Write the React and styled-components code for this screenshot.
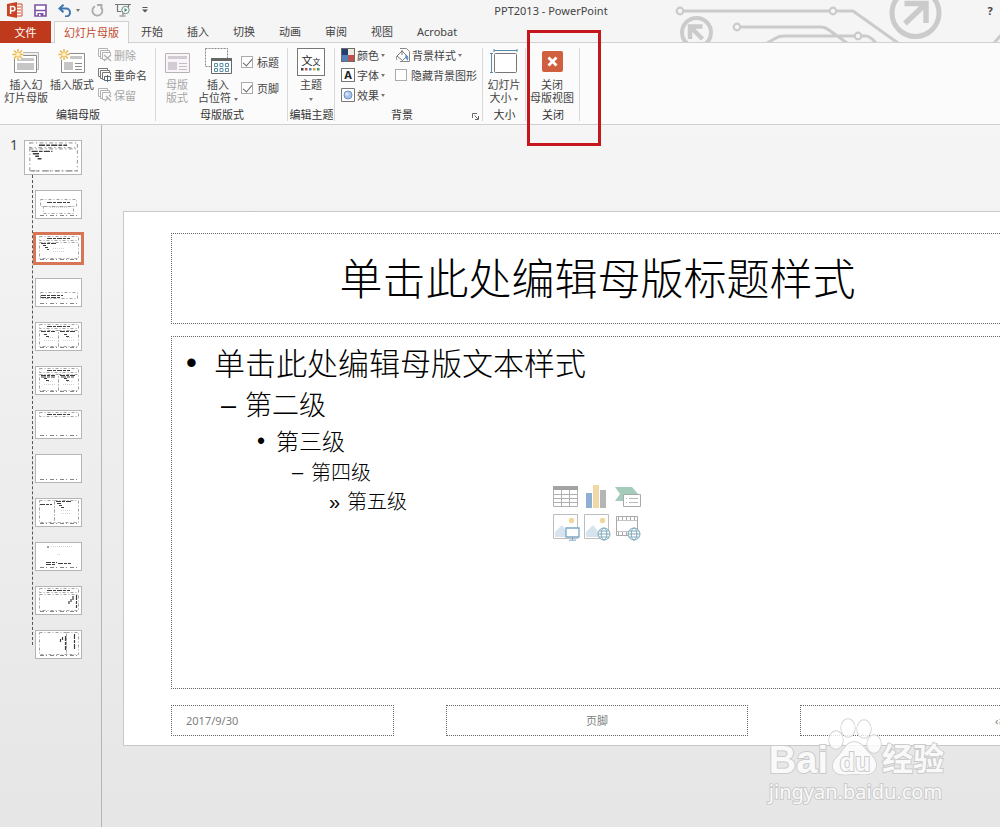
import React, { useState } from 'react'
import styled, { createGlobalStyle } from 'styled-components'

const GlobalStyle = createGlobalStyle`
    * {
        box-sizing: border-box;
    }
    body {
        margin: 0;
        overflow: hidden;
        background: #f5f5f5;
        color: #444;
        font: 11px/13px "Noto Sans", "Noto Sans CJK SC", sans-serif;
    }
    button {
        padding: 0;
        border: none;
        background: none;
        color: inherit;
        font: inherit;
    }
    svg {
        display: block;
        flex: none;
    }
`

const tabs = ['开始', '插入', '切换', '动画', '审阅', '视图', 'Acrobat']

const levels = [
    { text: '单击此处编辑母版文本样式', mark: '•', indent: 0, gap: 28, size: 31, height: 42 },
    { text: '第二级', mark: '–', indent: 35, gap: 24, size: 27, height: 42 },
    { text: '第三级', mark: '•', indent: 71, gap: 19, size: 23, height: 31 },
    { text: '第四级', mark: '–', indent: 106, gap: 19, size: 20, height: 31 },
    { text: '第五级', mark: '»', indent: 143, gap: 18, size: 20, height: 28 },
]

const layouts = ['title', 'content', 'section', 'two', 'compare', 'titleOnly', 'blank', 'caption', 'picture', 'vertical', 'verticalTitle']

/* ---------- quick access icons ---------- */

const LogoIcon = () => (
    <svg width="16" height="16" viewBox="0 0 16 16">
        <path d="M9 2h6v12H9z" fill="#fff" stroke="#d04a2b" />
        <path d="M10 5h4M10 8h4M10 11h4" stroke="#d04a2b" />
        <path d="M0 2l10-2v16L0 14z" fill="#cb4325" />
        <path d="M3.600 12V4.500h2.200a2 2 0 0 1 0 4.300H3.600" fill="none" stroke="#fff" strokeWidth="1.500" />
    </svg>
)

const SaveIcon = () => (
    <svg width="13" height="13" viewBox="0 0 13 13">
        <path d="M1 1h11v11H1z" fill="#fff" stroke="#7c52a4" strokeWidth="1.600" />
        <path d="M1 6.500h11" stroke="#7c52a4" strokeWidth="1.500" />
        <path d="M3.500 12V9h6v3" fill="#7c52a4" />
        <path d="M5 10h1.500v2H5z" fill="#fff" />
    </svg>
)

const UndoIcon = () => (
    <svg width="14" height="13" viewBox="0 0 14 13">
        <path d="M1.500 4.500H8a4 4 0 0 1 0 8H7M5.500 .8L1.500 4.500l4 3.700" fill="none" stroke="#3d76ad" strokeWidth="2" />
    </svg>
)

const RedoIcon = () => (
    <svg width="13" height="13" viewBox="0 0 13 13">
        <path d="M9.800 3A5 5 0 1 1 4 2.300M6 1h4.500v4.500" fill="none" stroke="#ababab" strokeWidth="1.800" />
    </svg>
)

const ShowIcon = () => (
    <svg width="16" height="14" viewBox="0 0 16 14">
        <path d="M0 1.500h16M2.500 1.500v7h4M13.500 1.500v3M8 9v3M4.500 13h6" fill="none" stroke="#777" strokeWidth="1.200" />
        <circle cx="10.500" cy="7" r="3.700" fill="#fff" stroke="#6c8c80" />
        <path d="M9.500 5l3 2-3 2z" fill="#3f9474" />
    </svg>
)

const QatMenuIcon = () => (
    <svg width="6" height="6" viewBox="0 0 6 6">
        <path d="M.5 .5h5" stroke="#555" />
        <path d="M0 2.500h6l-3 3z" fill="#555" />
    </svg>
)

const Circuit = () => (
    <svg width="330" height="42" viewBox="670 0 330 42" fill="none" stroke="#cbcbcb" strokeWidth="3">
        <path d="M683 11h146M837 11h16l45 32M740 27h81q4 0 8 3l18 13M767 43l9-5q3-2 8-2h70M862 36h4q4 0 10 7M994 43l8-9" />
        <circle cx="680" cy="11" r="3.300" strokeWidth="2.200" />
        <circle cx="833" cy="11" r="3.300" strokeWidth="2.200" />
        <circle cx="737" cy="27" r="3.300" strokeWidth="2.200" />
        <circle cx="858" cy="36" r="3.300" strokeWidth="2.200" />
        <circle cx="696.500" cy="32.500" r="14.500" strokeWidth="4" />
        <path d="M690 39V26.500h12.500M690.500 27l12 12" strokeWidth="4.500" />
        <circle cx="915.500" cy="13" r="23.500" strokeWidth="5" />
        <path d="M904.500 3.500H926V23M925 4.500l-20 19" strokeWidth="5.500" />
    </svg>
)

/* ---------- ribbon icons ---------- */

const Spark = () => (
    <path d="M6 0v11M.5 5.500h11M2 1.500l8 8M10 1.500l-8 8" stroke="#e9b64b" strokeWidth="1.400" />
)

const InsertMasterIcon = () => (
    <svg width="28" height="26" viewBox="0 0 28 26">
        <path d="M4.500 3.500h22v17h-22z" fill="#eee" stroke="#b5b5b5" />
        <path d="M2.500 6.500h22v17h-22z" fill="#fff" stroke="#8b8b8b" />
        <path d="M5 9h17v3H5zM5 14h17v7H5z" fill="#c6c6c6" />
        <circle cx="6" cy="5.500" r="5.500" fill="#fbfbfb" />
        <Spark />
        <circle cx="6" cy="5.500" r="2" fill="#fff3c4" />
    </svg>
)

const InsertLayoutIcon = () => (
    <svg width="28" height="26" viewBox="0 0 28 26">
        <path d="M3.500 4.500h23v19h-23z" fill="#fff" stroke="#8b8b8b" />
        <path d="M12 7h12v3H12zM6 13h9v8H6z" fill="#c6c6c6" />
        <path d="M17 14.500h7M17 17.500h7M17 20.500h7" stroke="#8b8b8b" />
        <circle cx="6" cy="5.500" r="5.500" fill="#fbfbfb" />
        <Spark />
        <circle cx="6" cy="5.500" r="2" fill="#fff3c4" />
    </svg>
)

const MasterLayoutIcon = () => (
    <svg width="25" height="24" viewBox="0 0 25 24">
        <path d="M.5 3.500h24v19H.5z" fill="#f8f4f8" stroke="#b9b2b9" />
        <path d="M3 6h19v3H3zM3 12h9v8H3z" fill="#d3cbd3" />
        <path d="M14 13.500h8M14 16.500h8M14 19.500h8" stroke="#c5bdc5" />
    </svg>
)

const PlaceholderIcon = () => (
    <svg width="27" height="27" viewBox="0 0 27 27">
        <path d="M.5 .5h22v18H.5z" fill="#fff" stroke="#888" strokeDasharray="2 1" />
        <path d="M6.500 10.500h20v15h-20z" fill="#fff" stroke="#666" />
        <path d="M6 10h21v3H6z" fill="#666" />
        <path d="M9.500 15.500h3v3h-3zM15 15.500h3v3h-3zM20.500 15.500h3v3h-3zM9.500 20.500h3v3h-3zM15 20.500h3v3h-3zM20.500 20.500h3v3h-3z" fill="none" stroke="#5c8fa8" />
    </svg>
)

const SlideSizeIcon = () => (
    <svg width="28" height="25" viewBox="0 0 28 25">
        <path d="M4 1.500h23M4 0v3M27 0v3M1.500 4v20M0 4.500h3M0 23.500h3" stroke="#5b8ba8" fill="none" />
        <rect x="4.500" y="4.500" width="22" height="19" rx="1" fill="#fff" stroke="#777" />
    </svg>
)

const CloseIcon = () => (
    <svg width="21" height="21" viewBox="0 0 21 21">
        <rect width="21" height="21" rx="2" fill="#d05f40" />
        <path d="M6.500 6.500l8 8M14.500 6.500l-8 8" stroke="#fff" strokeWidth="2.800" />
    </svg>
)

const SlideStack = ({ color, children }) => (
    <svg width="14" height="14" viewBox="0 0 14 14" fill="none" stroke={color}>
        <path d="M2.500 8.500h-2v-8h9v2" />
        <path d="M4.500 10.500h-2v-8h9v2" />
        <path d="M7 11.500H4.500v-7h8V7" />
        {children}
    </svg>
)

const ColorsIcon = () => (
    <svg width="14" height="14" viewBox="0 0 14 14">
        <path d="M0 0h14v14H0z" fill="#6b6b6b" />
        <path d="M1 1h6v6H1z" fill="#243f6f" />
        <path d="M7 1h6v6H7z" fill="#efeadf" />
        <path d="M1 7h6v6H1z" fill="#5182bb" />
        <path d="M7 7h6v6H7z" fill="#c0504d" />
    </svg>
)

const EffectsIcon = () => (
    <svg width="14" height="14" viewBox="0 0 14 14">
        <path d="M.5 .5h13v13H.5z" fill="#fff" stroke="#777" />
        <circle cx="7" cy="7" r="4" fill="#a9c4e8" stroke="#6f93c4" />
        <circle cx="6" cy="6" r="1.800" fill="#d9e6f7" />
    </svg>
)

const BucketIcon = () => (
    <svg width="14" height="14" viewBox="0 0 14 14" fill="none">
        <path d="M4 .5h6.500l3 3v10H4" fill="#fff" stroke="#888" />
        <path d="M1 8l5-5 5 5-4.500 4.500z" fill="#fff" stroke="#777" />
        <path d="M6 7V2" stroke="#777" />
        <path d="M10 7c2 1 2 3 1.500 5-1.500-1-2-3-1.500-5z" fill="#5b8fc7" stroke="#5b8fc7" />
        <path d="M1 8c-1 2-.5 3.500 0 4" stroke="#777" />
    </svg>
)

const LauncherIcon = () => (
    <svg width="7" height="7" viewBox="0 0 7 7" fill="none" stroke="#666">
        <path d="M.5 5V.5H5M2.500 2.500l3.500 3.500M6.500 3v3.500H3" />
    </svg>
)

/* ---------- placeholder icons ---------- */

const Globe = ({ x }) => (
    <g fill="none" stroke="#7fa9bd" strokeWidth="1">
        <circle cx={x} cy="20" r="6" fill="#fff" />
        <ellipse cx={x} cy="20" rx="2.800" ry="6" />
        <path d={`M${x - 6} 20h12M${x - 5} 17h10M${x - 5} 23h10`} />
    </g>
)

const PictureBase = () => (
    <g>
        <path d="M.5 .5h24v24H.5z" fill="#fff" stroke="#bdbdbd" />
        <circle cx="18.500" cy="6.500" r="2.700" fill="#f0d89c" />
        <path d="M2 23v-5l6-6q1-1 2 0l8 11z" fill="#d7e4ef" />
    </g>
)

const TableGlyph = () => (
    <svg width="25" height="23" viewBox="0 0 25 23">
        <path d="M.5 1.500h24v20H.5zM.5 9.500h24M.5 13.500h24M.5 17.500h24M8.500 5v17M16.500 5v17" fill="#fff" stroke="#b0b0b0" />
        <path d="M0 1h25v4H0z" fill="#a3a3a3" />
    </svg>
)

const ChartGlyph = () => (
    <svg width="25" height="23" viewBox="0 0 25 23">
        <path d="M2 8h6v15H2z" fill="#8fb0d3" />
        <path d="M9 0h6v23H9z" fill="#f0d9a5" />
        <path d="M16 5h6v18h-6z" fill="#b5b5b5" />
    </svg>
)

const SmartArtGlyph = () => (
    <svg width="26" height="23" viewBox="0 0 26 23">
        <path d="M0 2h17l6 7-7 7H0l5-7z" fill="#a5cbbb" />
        <path d="M8.500 9.500h17v12h-17z" fill="#fff" stroke="#aaa" />
        <path d="M11 13.500h1M14 13.500h9M11 17.500h1M14 17.500h9" stroke="#b9b9b9" />
    </svg>
)

const PictureGlyph = () => (
    <svg width="27" height="27" viewBox="0 0 27 27">
        <PictureBase />
        <path d="M13 14h13v9H13z" fill="#fff" stroke="#7ba7c4" strokeWidth="1.300" />
        <path d="M19.500 23v3M16 26.200h7" stroke="#7ba7c4" />
    </svg>
)

const OnlinePictureGlyph = () => (
    <svg width="27" height="27" viewBox="0 0 27 27">
        <PictureBase />
        <Globe x={20} />
    </svg>
)

const VideoGlyph = () => (
    <svg width="26" height="27" viewBox="0 0 26 27">
        <path d="M1.500 2.500h21v19h-21z" fill="#fff" stroke="#aaa" />
        <path d="M3 4.500h19M3 19.500h11" stroke="#aaa" strokeWidth="3" strokeDasharray="1 3" />
        <path d="M2 6.500h20M2 17.500h12" stroke="#c4c4c4" />
        <Globe x={19} />
    </svg>
)

/* ---------- thumbnails ---------- */

const Frame = props => <rect {...props} fill="none" stroke="#a2a2a2" strokeWidth="1" strokeDasharray="3 2 1 2" />

const Ink = ({ d, light }) => <path d={d} fill="none" stroke={light ? '#d0d4d0' : '#3d3d3d'} strokeWidth="1.200" strokeDasharray={light ? '1 1' : '5 1 3 1'} />

const Thumb = ({ kind }) => {
    const top = !['title', 'section', 'blank', 'caption', 'picture', 'verticalTitle'].includes(kind)
    return (
        <svg width="100%" height="100%" viewBox="0 0 45 27">
            <path d="M4 24.500h38" stroke="#858585" strokeDasharray="4 2 1 3" />
            {top && <Ink d="M11 3.500h23" />}
            {top && <Frame x="3.500" y="1.500" width="39" height="4" />}
            {kind === 'master' && <g><Frame x="3.500" y="6.500" width="39" height="18" /><Ink d="M5 8.500h17M6 10.500h5M8 12.500h3M10 14.500h3" /></g>}
            {kind === 'title' && <g><Frame x="4.500" y="8.500" width="36" height="7" /><Frame x="7.500" y="15.500" width="30" height="7" /><Ink d="M11 11.500h23" /><Ink light d="M14 16.500h17" /></g>}
            {kind === 'content' && <g><Frame x="3.500" y="7.500" width="39" height="16" /><Ink d="M5 8.500h15M7 10.500h3M9 12.500h3M11 14.500h2" /><Ink light d="M17 13.500h11M17 16.500h11" /></g>}
            {kind === 'section' && <g><Frame x="4.500" y="13.500" width="37" height="6" /><Ink d="M5 16.500h22M5 18.500h20" /></g>}
            {(kind === 'two' || kind === 'compare') && (
                <g>
                    <Frame x="3.500" y="7.500" width="19" height="16" />
                    <Frame x="22.500" y="7.500" width="20" height="16" />
                    <Ink d="M5 8.500h14M24 8.500h15M8 11.500h3M10 13.500h3M28 11.500h3M30 13.500h3" />
                    <Ink light d="M8 17.500h11M27 17.500h11M12 14.500h6M31 14.500h6" />
                    {kind === 'compare' && <Ink d="M5 10h14M25 10h13" />}
                </g>
            )}
            {kind === 'caption' && <g><Frame x="3.500" y="1.500" width="15" height="22" /><Frame x="18.500" y="1.500" width="24" height="22" /><Ink d="M4 5.500h12M20 2.500h16M21 4.500h4M23 6.500h3M25 8.500h3" /><Ink light d="M25 11.500h10M25 14.500h10" /></g>}
            {kind === 'picture' && <g><Ink d="M11 4h2M10 19.500h11M10 21.500h9M22 20.500h13" /><Ink light d="M15 3.500h21M21 11.500h4" /></g>}
            {kind === 'vertical' && <g><Frame x="3.500" y="7.500" width="39" height="16" /><Ink d="M40.500 8v13M37 9v4M35 12v3M33 14v3" /></g>}
            {kind === 'verticalTitle' && <g><Frame x="3.500" y="1.500" width="27" height="22" /><Frame x="30.500" y="1.500" width="12" height="22" /><Ink d="M38.500 3v16M29.500 5v14M26.500 6v3M24.500 8v3" /></g>}
        </svg>
    )
}

const Paw = () => (
    <svg width="54" height="58" viewBox="0 0 54 58" fill="#fff" fillOpacity=".8" stroke="#cdcdcd" strokeWidth="1.300">
        <ellipse cx="20" cy="10" rx="7" ry="9" />
        <ellipse cx="36" cy="11" rx="7" ry="9" />
        <ellipse cx="8" cy="22" rx="7" ry="9" />
        <ellipse cx="46" cy="26" rx="7" ry="9" />
        <path d="M26 24c8 0 10 6 15 11 5 4 8 9 7 14-2 8-10 8-21 7-11 1-20 2-22-6-1-6 2-9 7-14 5-6 7-12 14-12z" />
    </svg>
)

const App = () => {
    const [selected, setSelected] = useState('content')
    return (
        <Window>
            <GlobalStyle />
            <Header>
                <Art><Circuit /></Art>
                <TitleBar>
                    <QuickAccess>
                        <LogoIcon />
                        <button aria-label="保存"><SaveIcon /></button>
                        <UndoButton aria-label="撤消"><UndoIcon /><Caret /></UndoButton>
                        <button aria-label="恢复"><RedoIcon /></button>
                        <button aria-label="放映"><ShowIcon /></button>
                        <button aria-label="自定义"><QatMenuIcon /></button>
                    </QuickAccess>
                    <Title>PPT2013 - PowerPoint</Title>
                    <Help>?</Help>
                </TitleBar>
                <Tabs>
                    <FileTab>文件</FileTab>
                    <ActiveTab>幻灯片母版</ActiveTab>
                    {tabs.map(tab => <Tab key={tab}>{tab}</Tab>)}
                </Tabs>
            </Header>

            <Ribbon>
                <Group $width={156}>
                    <GroupBody $pad={3}>
                        <BigButton $width={46}><IconBox><InsertMasterIcon /></IconBox>插入幻<br />灯片母版</BigButton>
                        <BigButton $width={46}><IconBox><InsertLayoutIcon /></IconBox>插入版式</BigButton>
                        <Stack $pad={2}>
                            <SmallButton disabled><SlideStack color="#b3b3b3"><path d="M6 7l7 6M13 7l-7 6" strokeWidth="1.500" /></SlideStack>删除</SmallButton>
                            <SmallButton><SlideStack color="#777"><path d="M6.500 8.500h6v4h-6zM9.500 7v7" fill="#fff" stroke="#567" /></SlideStack>重命名</SmallButton>
                            <SmallButton disabled><SlideStack color="#b3b3b3"><path d="M7 13l3-3M8 8l5 5M11 7l2 2" strokeWidth="1.500" /></SlideStack>保留</SmallButton>
                        </Stack>
                    </GroupBody>
                    <GroupLabel>编辑母版</GroupLabel>
                </Group>
                <Group $width={132}>
                    <GroupBody $pad={2}>
                        <BigButton $width={38} disabled><IconBox><MasterLayoutIcon /></IconBox>母版<br />版式</BigButton>
                        <BigButton $width={44}><IconBox><PlaceholderIcon /></IconBox>插入<br />占位符 <Caret /></BigButton>
                        <CheckStack>
                            <CheckLabel><Check type="checkbox" defaultChecked />标题</CheckLabel>
                            <CheckLabel><Check type="checkbox" defaultChecked />页脚</CheckLabel>
                        </CheckStack>
                    </GroupBody>
                    <GroupLabel>母版版式</GroupLabel>
                </Group>
                <Group $width={47}>
                    <GroupBody>
                        <BigButton $width={46}>
                            <IconBox>
                                <ThemeTile>
                                    <span>文<small>文</small></span>
                                    <svg width="20" height="3" viewBox="0 0 20 3">
                                        {['#444', '#c0504d', '#5182bb', '#e0a040', '#4a9470'].map((c, i) => <rect key={c} x={i * 4} width="2.500" height="2.500" fill={c} />)}
                                    </svg>
                                </ThemeTile>
                            </IconBox>
                            主题<br /><Caret />
                        </BigButton>
                    </GroupBody>
                    <GroupLabel>编辑主题</GroupLabel>
                </Group>
                <Group $width={148}>
                    <GroupBody>
                        <Stack $pad={5} $width={60}>
                            <SmallButton><ColorsIcon />颜色<Caret /></SmallButton>
                            <SmallButton><FontTile>A</FontTile>字体<Caret /></SmallButton>
                            <SmallButton><EffectsIcon />效果<Caret /></SmallButton>
                        </Stack>
                        <Stack>
                            <SmallButton><BucketIcon />背景样式<Caret /></SmallButton>
                            <CheckLabel><Check type="checkbox" />隐藏背景图形</CheckLabel>
                        </Stack>
                    </GroupBody>
                    <BackgroundLabel>背景<Launcher aria-label="背景格式"><LauncherIcon /></Launcher></BackgroundLabel>
                </Group>
                <Group $width={43}>
                    <GroupBody>
                        <BigButton $width={42}><IconBox><SlideSizeIcon /></IconBox>幻灯片<br />大小 <Caret /></BigButton>
                    </GroupBody>
                    <GroupLabel>大小</GroupLabel>
                </Group>
                <Group $width={54}>
                    <GroupBody>
                        <BigButton $width={52}><IconBox><CloseIcon /></IconBox>关闭<br />母版视图</BigButton>
                    </GroupBody>
                    <GroupLabel>关闭</GroupLabel>
                    <Highlight />
                </Group>
            </Ribbon>

            <Main>
                <Sidebar>
                    <MasterRow>
                        <Number>1</Number>
                        <MasterThumb aria-label="master"><Thumb kind="master" /></MasterThumb>
                    </MasterRow>
                    <Layouts>
                        {layouts.map(kind =>
                            <LayoutItem key={kind}>
                                <LayoutThumb aria-label={kind} $active={kind === selected} onClick={() => setSelected(kind)}>
                                    <Thumb kind={kind} />
                                </LayoutThumb>
                            </LayoutItem>
                        )}
                    </Layouts>
                </Sidebar>

                <Workspace>
                    <Slide>
                        <SlideTitle>单击此处编辑母版标题样式</SlideTitle>
                        <SlideBody>
                            <Outline>
                                {levels.map(level =>
                                    <Level key={level.text} $indent={level.indent} $size={level.size} $height={level.height}>
                                        <Mark $width={level.gap}>{level.mark}</Mark>
                                        {level.text}
                                    </Level>
                                )}
                            </Outline>
                            <Glyphs>
                                <TableGlyph />
                                <ChartGlyph />
                                <SmartArtGlyph />
                                <PictureGlyph />
                                <OnlinePictureGlyph />
                                <VideoGlyph />
                            </Glyphs>
                        </SlideBody>
                        <SlideFooter>
                            <FooterBox $width={223} $align="flex-start">2017/9/30</FooterBox>
                            <FooterBox $width={302} $align="center">页脚</FooterBox>
                            <FooterBox $width={224} $align="flex-end">‹#›</FooterBox>
                        </SlideFooter>
                    </Slide>
                </Workspace>
            </Main>

            <Watermark>
                <Brand>
                    Bai
                    <PawBox><Paw /><Du>du</Du></PawBox>
                    <BrandCn>经验</BrandCn>
                </Brand>
                <Site>jingyan.baidu.com</Site>
            </Watermark>
        </Window>
    )
}

const Window = styled.div`
    position: relative;
    display: flex;
    flex-direction: column;
    height: 100vh;
    overflow: hidden;
`

const Header = styled.header`
    position: relative;
    height: 43px;
    border-bottom: 1px solid #d0d0d0;
`

const Art = styled.div`
    position: absolute;
    top: 0;
    right: 0;
`

const TitleBar = styled.div`
    position: relative;
    display: flex;
    align-items: center;
    height: 20px;
`

const QuickAccess = styled.div`
    display: flex;
    align-items: center;
    gap: 11px;
    width: 150px;
    padding-left: 7px;
`

const UndoButton = styled.button`
    display: flex;
    align-items: center;
    gap: 4px;
`

const Title = styled.h1`
    flex: 1;
    margin: 0;
    text-align: center;
    font-size: 11px;
    font-weight: 400;
`

const Help = styled.button`
    width: 48px;
    padding-left: 28px;
    font-weight: 700;
`

const Caret = styled.i`
    display: inline-block;
    flex: none;
    vertical-align: middle;
    border: 2px solid transparent;
    border-top: 3px solid #777;
    border-bottom: none;
`

const Tabs = styled.nav`
    position: relative;
    display: flex;
    height: 23px;
    padding-top: 1px;
`

const Tab = styled.button`
    padding: 0 12px 1px;
`

const FileTab = styled.button`
    width: 51px;
    background: #bf3a1c;
    color: #fff;
`

const ActiveTab = styled.button`
    width: 75px;
    height: 23px;
    margin-left: 3px;
    border: 1px solid #d0d0d0;
    border-bottom-color: #fbfbfb;
    background: #fbfbfb;
    color: #c24a2b;
`

const Ribbon = styled.div`
    display: flex;
    flex: none;
    padding-top: 2px;
    border-bottom: 1px solid #cfcfcf;
    background: #fbfbfb;
`

const Group = styled.section`
    position: relative;
    display: flex;
    flex-direction: column;
    flex: none;
    width: ${p => p.$width}px;
    background: linear-gradient(#d8d8d8, #d8d8d8) right 3px / 1px 73px no-repeat;
`

const GroupBody = styled.div`
    display: flex;
    height: 60px;
    padding-left: ${p => p.$pad || 0}px;
`

const GroupLabel = styled.div`
    display: flex;
    align-items: center;
    justify-content: center;
    height: 19px;
    padding-bottom: 1px;
    white-space: nowrap;
    color: #333;
`

const BackgroundLabel = styled(GroupLabel)`
    padding-right: 14px;
`

const Launcher = styled.button`
    position: absolute;
    right: 4px;
    bottom: 4px;
`

const BigButton = styled.button`
    display: block;
    flex: none;
    align-self: flex-start;
    width: ${p => p.$width}px;
    white-space: nowrap;
    color: ${p => (p.disabled ? '#a6a6a6' : '#444')};
`

const IconBox = styled.span`
    display: flex;
    align-items: center;
    justify-content: center;
    height: 33px;
`

const Stack = styled.div`
    display: flex;
    flex-direction: column;
    flex: none;
    width: ${p => (p.$width ? p.$width + 'px' : 'auto')};
    padding-left: ${p => p.$pad || 0}px;
`

const SmallButton = styled.button`
    display: flex;
    align-items: center;
    gap: 2px;
    height: 20px;
    padding-left: 1px;
    white-space: nowrap;
    color: ${p => (p.disabled ? '#a6a6a6' : '#444')};
`

const CheckStack = styled.div`
    display: flex;
    flex-direction: column;
    gap: 6px;
    padding: 7px 0 0 1px;
`

const CheckLabel = styled.label`
    display: flex;
    align-items: center;
    gap: 4px;
    height: 20px;
    white-space: nowrap;
`

const Check = styled.input`
    appearance: none;
    display: flex;
    justify-content: center;
    width: 12px;
    height: 12px;
    margin: 0;
    border: 1px solid #ababab;
    background: #fff;
    &:checked::after {
        content: '';
        width: 4px;
        height: 8px;
        border: solid #666;
        border-width: 0 1px 1px 0;
        transform: rotate(40deg);
    }
`

const ThemeTile = styled.span`
    display: flex;
    flex-direction: column;
    align-items: center;
    justify-content: flex-end;
    width: 28px;
    height: 28px;
    padding-bottom: 4px;
    border: 1px solid #777;
    background: #fff;
    color: #222;
    small {
        font-size: 8px;
    }
`

const FontTile = styled.span`
    width: 14px;
    height: 14px;
    border: 1px solid #777;
    background: #fff;
    color: #222;
    font-weight: 700;
    line-height: 12px;
    text-align: center;
`

const Highlight = styled.div`
    position: absolute;
    top: -15px;
    left: 1px;
    width: 74px;
    height: 116px;
    border: 3px solid #c4161c;
    pointer-events: none;
    z-index: 2;
`

const Main = styled.main`
    display: flex;
    flex: 1;
    min-height: 0;
    background: linear-gradient(#f5f5f5, #e6e6e6);
`

const Sidebar = styled.aside`
    flex: none;
    width: 102px;
    padding-top: 15px;
    border-right: 1px solid #b5b5b5;
`

const MasterRow = styled.div`
    display: flex;
`

const Number = styled.span`
    width: 24px;
    padding-right: 6px;
    font-size: 14px;
    line-height: 10px;
    text-align: right;
`

const MasterThumb = styled.button`
    width: 58px;
    height: 35px;
    border: 1px solid #b5b5b5;
    background: #fff;
`

const Layouts = styled.ul`
    position: relative;
    display: flex;
    flex-direction: column;
    gap: 15px;
    margin: 0 0 0 32px;
    padding: 15px 0 0 3px;
    list-style: none;
    &::before {
        content: '';
        position: absolute;
        top: 0;
        bottom: 14px;
        left: 0;
        border-left: 1px dashed #555;
    }
`

const LayoutItem = styled.li`
    height: 29px;
`

const LayoutThumb = styled.button`
    display: block;
    width: 47px;
    height: 29px;
    border: 1px solid #b5b5b5;
    background: #fff;
    outline: ${p => (p.$active ? '3px solid #d77657' : 'none')};
    outline-offset: -1px;
`

const Workspace = styled.div`
    flex: 1;
    min-width: 0;
    padding: 86px 0 0 21px;
    overflow: hidden;
`

const Slide = styled.article`
    display: flex;
    flex-direction: column;
    width: 949px;
    padding: 21px 47px 9px;
    border: 1px solid #c8c8c8;
    background: #fff;
    color: #000;
`

const Placeholder = styled.div`
    border: 1px dotted #666;
`

const SlideTitle = styled(Placeholder)`
    display: flex;
    align-items: center;
    justify-content: center;
    height: 91px;
    font-size: 43px;
    font-weight: 300;
    line-height: 60px;
`

const SlideBody = styled(Placeholder)`
    display: grid;
    height: 353px;
    margin: 12px 0 16px;
`

const Outline = styled.ul`
    grid-area: 1 / 1;
    margin: 0;
    padding: 5px 14px;
    list-style: none;
`

const Level = styled.li`
    display: flex;
    height: ${p => p.$height}px;
    padding-left: ${p => p.$indent}px;
    font-size: ${p => p.$size}px;
    font-weight: 300;
    line-height: ${p => p.$height}px;
`

const Mark = styled.span`
    flex: none;
    width: ${p => p.$width}px;
    font-family: "Liberation Sans", sans-serif;
    font-weight: 400;
`

const Glyphs = styled.div`
    grid-area: 1 / 1;
    place-self: center;
    display: grid;
    grid-template-columns: repeat(3, 27px);
    gap: 6px 4px;
`

const SlideFooter = styled.footer`
    display: flex;
    justify-content: space-between;
`

const FooterBox = styled(Placeholder)`
    display: flex;
    align-items: center;
    justify-content: ${p => p.$align};
    width: ${p => p.$width}px;
    height: 31px;
    padding: 0 14px;
    color: #808080;
`

const Watermark = styled.div`
    position: absolute;
    right: 56px;
    bottom: 22px;
    color: #f9f9f9;
    -webkit-text-stroke: 2px #cbcbcb;
    paint-order: stroke fill;
`

const Brand = styled.div`
    display: flex;
    align-items: flex-end;
    font: 700 38px/38px "Liberation Sans", sans-serif;
`

const PawBox = styled.span`
    position: relative;
    margin-bottom: 3px;
`

const Du = styled.span`
    position: absolute;
    right: 0;
    bottom: 0;
    left: 0;
    font-size: 25px;
    line-height: 28px;
    text-align: center;
`

const BrandCn = styled.span`
    font: 700 31px/44px "Noto Sans CJK SC", sans-serif;
`

const Site = styled.div`
    font: 20px/26px "Noto Sans", sans-serif;
`

export default App
